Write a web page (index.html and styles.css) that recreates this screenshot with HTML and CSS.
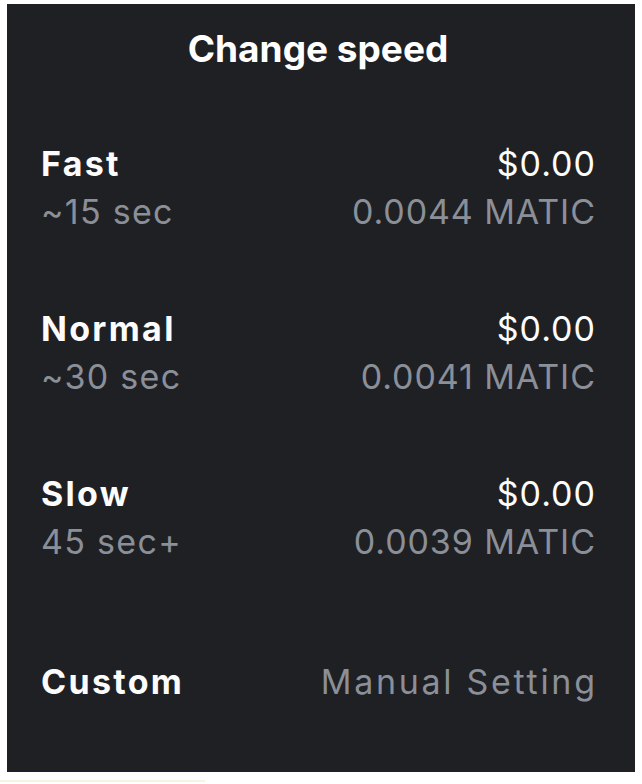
FILE: index.html
```html
<!DOCTYPE html>
<html lang="en">
<head>
<meta charset="utf-8">
<title>Change speed</title>
<link rel="stylesheet" href="styles.css">
</head>
<body>
<div class="sheet">
  <h1 class="title">Change speed</h1>
  <ul class="options">
    <li class="option">
      <div class="col">
        <span class="name">Fast</span>
        <span class="sub sub-left">~15 sec</span>
      </div>
      <div class="col col-right">
        <span class="fiat">$0.00</span>
        <span class="sub">0.0044 MATIC</span>
      </div>
    </li>
    <li class="option">
      <div class="col">
        <span class="name">Normal</span>
        <span class="sub sub-left">~30 sec</span>
      </div>
      <div class="col col-right">
        <span class="fiat">$0.00</span>
        <span class="sub">0.0041 MATIC</span>
      </div>
    </li>
    <li class="option">
      <div class="col">
        <span class="name">Slow</span>
        <span class="sub sub-left">45 sec+</span>
      </div>
      <div class="col col-right">
        <span class="fiat">$0.00</span>
        <span class="sub">0.0039 MATIC</span>
      </div>
    </li>
    <li class="option option-custom">
      <span class="name">Custom</span>
      <span class="sub sub-wide">Manual Setting</span>
    </li>
  </ul>
</div>
<div class="edge-line"></div>
</body>
</html>
```
FILE: styles.css
```css
html, body {
  margin: 0;
  padding: 0;
  background: #ffffff;
}

body {
  font-family: Inter, "Liberation Sans", Arial, sans-serif;
}

.sheet {
  box-sizing: border-box;
  width: 628px;
  height: 768px;
  margin: 4px 0 0 7px;
  padding: 21px 40px 0 34px;
  background: #1f2024;
  color: #ffffff;
}

.title {
  margin: 0;
  font-size: 37px;
  line-height: 48px;
  font-weight: 700;
  text-align: center;
}

.options {
  list-style: none;
  margin: 67px 0 0 0;
  padding: 0;
  display: flex;
  flex-direction: column;
  gap: 69px;
}

.option {
  display: flex;
  justify-content: space-between;
  font-size: 34px;
  line-height: 48px;
}

.col {
  display: flex;
  flex-direction: column;
}

.col-right {
  align-items: flex-end;
}

.name {
  font-weight: 700;
  color: #fcfcfc;
  letter-spacing: 2.3px;
}

.fiat {
  font-weight: 400;
  color: #fcfcfc;
  letter-spacing: 1px;
  margin-right: -1px;
}

.sub {
  font-weight: 400;
  color: #8a8f98;
  letter-spacing: 0.9px;
  margin-right: -0.9px;
}

.sub-left {
  letter-spacing: 1.3px;
}

.sub-wide {
  letter-spacing: 2.7px;
  margin-right: -2.7px;
}

.option-custom {
  margin-top: 23px;
  align-items: baseline;
}

.edge-line {
  width: 205px;
  height: 2px;
  margin-top: 8px;
  background: #f8f4e2;
}
```
